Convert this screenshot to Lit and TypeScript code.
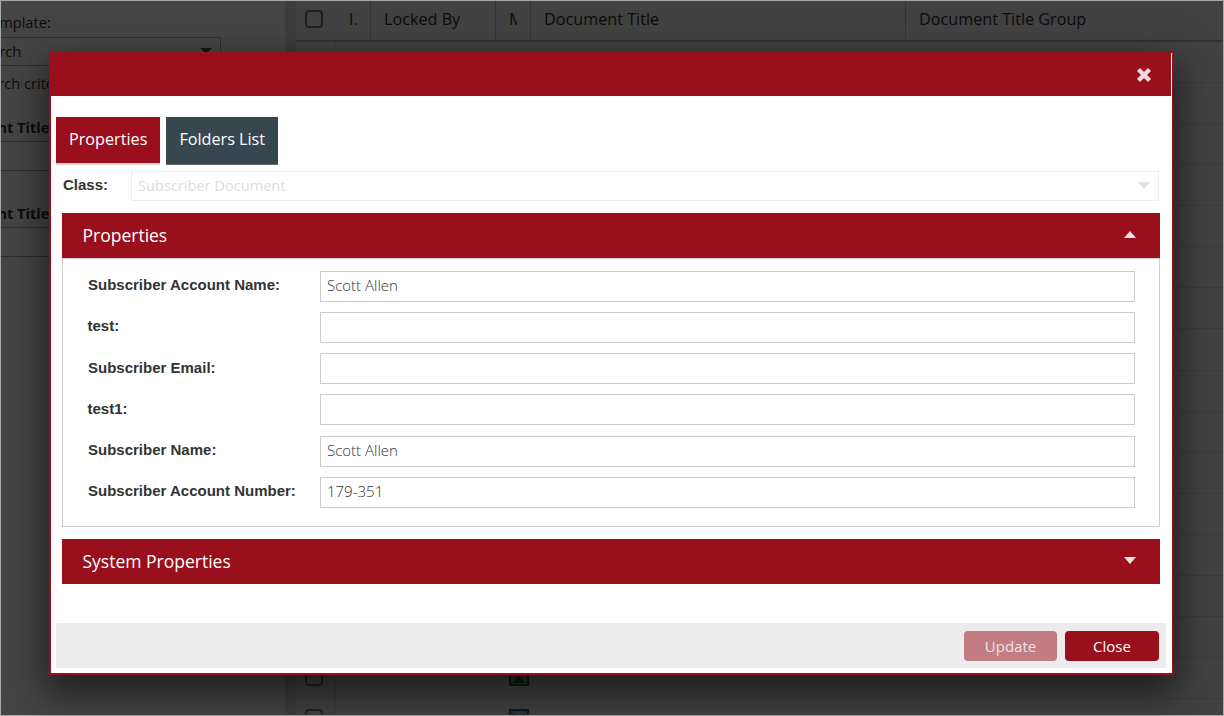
import { LitElement, html, css } from 'lit'
import { customElement } from 'lit/decorators.js'

const FIELDS = [
  { label: 'Subscriber Account Name:', value: 'Scott Allen' },
  { label: 'test:', value: '', short: true },
  { label: 'Subscriber Email:', value: '' },
  { label: 'test1:', value: '', short: true },
  { label: 'Subscriber Name:', value: 'Scott Allen' },
  { label: 'Subscriber Account Number:', value: '179-351' },
]

// body rows of the grid behind the dialog
const ROWS = Array.from({ length: 17 }, (_, i) => i)

@customElement('app-root')
export class AppRoot extends LitElement {
  static styles = css`
    :host {
      display: block;
      position: relative;
      width: 1224px;
      height: 716px;
      overflow: hidden;
      font-family: 'Open Sans', sans-serif;
      color: #333;
      background: #fff;
    }

    /* page behind the dialog */
    .page {
      display: flex;
      height: 716px;
    }
    .left {
      width: 285px;
      flex: none;
      overflow: hidden;
      font-size: 14.6px;
    }
    /* the panel is scrolled sideways, so its text starts off screen */
    .left-inner {
      width: 247px;
      margin-left: -26px;
      padding-top: 12px;
    }
    .left-label {
      height: 25px;
      line-height: 20px;
      padding-left: 9px;
    }
    .left-select {
      height: 29px;
      box-sizing: border-box;
      border: 1px solid #aaa;
      line-height: 27px;
      display: flex;
      justify-content: space-between;
    }
    .left-select i {
      width: 0;
      height: 0;
      margin: 10px 8px 0 0;
      border: 6px solid transparent;
      border-top: 6px solid #555;
      border-bottom: 0;
    }
    .left-hint {
      height: 34px;
      line-height: 34px;
      white-space: nowrap;
    }
    .left-title {
      font-weight: 700;
      font-size: 14.5px;
      line-height: 26px;
      margin-left: -36px;
      border-bottom: 1px solid #aaa;
      white-space: nowrap;
      display: flex;
      align-items: flex-end;
      box-sizing: border-box;
    }
    .left-title.first {
      height: 42px;
    }
    .left-title.second {
      height: 57px;
    }
    .left-input {
      height: 28px;
      margin-left: -36px;
      border-bottom: 1px solid #aaa;
    }
    .splitter {
      width: 11px;
      flex: none;
      background: #e0e0e0;
    }
    .grid {
      flex: 1;
      font-size: 16.2px;
      background: #f2f2f2;
    }
    .grid-head {
      display: flex;
      height: 42px;
      box-sizing: border-box;
      border-bottom: 2px solid #bbb;
    }
    .cell {
      box-sizing: border-box;
      height: 40px;
      display: flex;
      align-items: center;
      border-right: 1px solid #c4c4c4;
      padding: 0 13px 2px;
      white-space: nowrap;
      flex: none;
    }
    .cell span {
      overflow: hidden;
    }
    .c-check {
      width: 39px;
      padding: 0 0 2px 9px;
      border-right: 0;
    }
    .c-i {
      width: 36px;
      padding-left: 14px;
    }
    .c-lock {
      width: 125px;
    }
    .c-m {
      width: 35px;
    }
    .c-title {
      width: 375px;
    }
    .c-group {
      flex: 1;
      border-right: 0;
    }
    .box {
      display: block;
      flex: none;
      width: 14px;
      height: 14px;
      border: 2px solid #777;
      border-radius: 4px;
    }
    .row {
      display: flex;
      height: 41.07px;
      box-sizing: border-box;
      border-bottom: 1px solid #dcdcdc;
      align-items: center;
    }
    .row-check {
      width: 40px;
      flex: none;
      box-sizing: border-box;
      padding: 0 0 2px 9px;
      border-right: 1px solid #dcdcdc;
      height: 100%;
      display: flex;
      align-items: center;
    }
    .file {
      display: block;
      margin: -2px 0 0 173px;
    }

    .overlay {
      position: absolute;
      inset: 0;
      background: rgba(0, 0, 0, 0.73);
      box-shadow: inset 0 0 0 1px #a8a8a8;
    }

    /* dialog */
    .modal {
      position: absolute;
      left: 49px;
      top: 52px;
      width: 1124px;
      height: 623px;
      box-sizing: border-box;
      background: #fff;
      border: solid #9a0f1c;
      border-width: 1px 1px 2px 2px;
      box-shadow: 0 15px 35px 5px rgba(0, 0, 0, 0.55);
      display: flex;
      flex-direction: column;
    }
    .titlebar {
      height: 43px;
      flex: none;
      margin-right: 1px;
      background: #9a0f1c;
      display: flex;
      align-items: center;
      justify-content: flex-end;
      padding-right: 19px;
    }
    .titlebar svg {
      display: block;
    }
    .body {
      flex: 1;
      padding: 21px 0 0 5px;
      min-height: 0;
    }
    .tabs {
      display: flex;
      gap: 6px;
      height: 48px;
    }
    .tab {
      box-sizing: border-box;
      height: 48px;
      padding: 0 13px 3px;
      display: flex;
      align-items: center;
      font-size: 16.2px;
      color: #fff;
      background: #37474f;
      border-bottom: 1px solid #666;
    }
    .tab.active {
      padding-bottom: 2px;
      background: #9a0f1c;
      border-bottom: 2px solid #d9cfd0;
    }
    .class-row {
      display: flex;
      align-items: center;
      margin: 6px 0 0 7px;
      height: 30px;
    }
    .lbl {
      font-family: 'Liberation Sans', Arial, sans-serif;
      font-weight: 700;
      font-size: 15px;
      color: #333;
    }
    .class-row .lbl {
      width: 68px;
      flex: none;
      margin-top: -4px;
    }
    .class-select {
      width: 1028px;
      height: 30px;
      box-sizing: border-box;
      border: 1px solid #eee;
      display: flex;
      align-items: center;
      justify-content: space-between;
      padding: 0 8px 2px 6px;
      font-size: 14.6px;
      color: #ddd;
    }
    .class-select i {
      width: 0;
      height: 0;
      border: 6px solid transparent;
      border-top: 7px solid #ddd;
      border-bottom: 0;
    }
    .section {
      margin: 12px 0 0 6px;
      width: 1098px;
    }
    .section-head {
      height: 45px;
      background: #9a0f1c;
      color: #fff;
      font-size: 17.5px;
      display: flex;
      align-items: center;
      justify-content: space-between;
      padding: 0 24px 2px 20.5px;
      box-sizing: border-box;
    }
    .section-head i {
      width: 0;
      height: 0;
      border: 6.5px solid transparent;
      border-bottom: 0;
      border-top: 7px solid #f3dfe1;
    }
    .section-head i.up {
      border-top: 0;
      border-bottom: 7px solid #f3dfe1;
    }
    .section-body {
      height: 269px;
      box-sizing: border-box;
      border: 1px solid #ccc;
      padding: 12px 24px 0 25px;
      display: flex;
      flex-direction: column;
      gap: 10.15px;
    }
    .field {
      display: flex;
      align-items: center;
      height: 31px;
    }
    .field .lbl {
      width: 232px;
      flex: none;
      margin-top: -3.5px;
    }
    .field .lbl.short {
      margin-left: -0.5px;
      width: 232.5px;
    }
    .input {
      flex: 1;
      height: 31px;
      box-sizing: border-box;
      border: 1px solid #ccc;
      padding-left: 6px;
      font-size: 15px;
      font-weight: 300;
      line-height: 27px;
      color: #333;
    }
    .footer {
      flex: none;
      height: 45px;
      margin: 0 6px 5px 5px;
      background: #ececec;
      display: flex;
      align-items: center;
      justify-content: flex-end;
      gap: 8px;
      padding-right: 7px;
    }
    .btn {
      height: 30px;
      border-radius: 4px;
      font-size: 15px;
      color: #fff;
      background: #9a0f1c;
      display: flex;
      align-items: center;
      justify-content: center;
      width: 94px;
    }
    .btn.off {
      width: 93px;
      background: #c27c82;
      color: #f1e3e4;
    }
  `

  renderFile(i: number) {
    if (i === 15) {
      return html`<svg class="file" width="20" height="19" viewBox="0 0 20 19">
        <rect x="1" y="1" width="18" height="17" fill="#a3c0ab" stroke="#1d6f42" stroke-width="2" />
        <path d="M3 16 9 8 12 11 17 16Z" fill="#1d6f42" />
      </svg>`
    }
    if (i === 16) {
      return html`<svg class="file" width="20" height="19" viewBox="0 0 20 19">
        <rect x="1" y="1" width="18" height="17" fill="#b4b8c4" stroke="#2b5797" stroke-width="2" />
        <path d="M5 5 8 14H12L15 5" fill="none" stroke="#2b5797" stroke-width="2" />
      </svg>`
    }
    return ''
  }

  render() {
    return html`
      <div class="page">
        <div class="left">
          <div class="left-inner">
            <div class="left-label">Template:</div>
            <div class="left-select"><span>Search</span><i></i></div>
            <div class="left-hint">Search criteria</div>
            <div class="left-title first">Document Title</div>
            <div class="left-input"></div>
            <div class="left-title second">Document Title</div>
            <div class="left-input"></div>
          </div>
        </div>
        <div class="splitter"></div>
        <div class="grid">
          <div class="grid-head">
            <div class="cell c-check"><i class="box"></i></div>
            <div class="cell c-i"><span>I.</span></div>
            <div class="cell c-lock"><span>Locked By</span></div>
            <div class="cell c-m"><span>M</span></div>
            <div class="cell c-title"><span>Document Title</span></div>
            <div class="cell c-group"><span>Document Title Group</span></div>
          </div>
          ${ROWS.map(
            (i) => html`
              <div class="row">
                <div class="row-check"><i class="box"></i></div>
                ${this.renderFile(i)}
              </div>
            `
          )}
        </div>
      </div>
      <div class="overlay"></div>
      <div class="modal">
        <div class="titlebar">
          <svg width="16" height="16" viewBox="0 0 16 16">
            <path
              d="M1.500 4 4 1.500 8 5.500 12 1.500 14.500 4 10.500 8 14.500 12 12 14.500 8 10.500 4 14.500 1.500 12 5.500 8Z"
              fill="#f3dde0"
              stroke="#f3dde0"
              stroke-width="1"
              stroke-linejoin="round"
            />
          </svg>
        </div>
        <div class="body">
          <div class="tabs">
            <div class="tab active">Properties</div>
            <div class="tab">Folders List</div>
          </div>
          <div class="class-row">
            <span class="lbl">Class:</span>
            <div class="class-select"><span>Subscriber Document</span><i></i></div>
          </div>
          <div class="section">
            <div class="section-head"><span>Properties</span><i class="up"></i></div>
            <div class="section-body">
              ${FIELDS.map(
                (f) => html`
                  <div class="field">
                    <span class="lbl ${f.short ? 'short' : ''}">${f.label}</span>
                    <div class="input">${f.value}</div>
                  </div>
                `
              )}
            </div>
          </div>
          <div class="section">
            <div class="section-head"><span>System Properties</span><i></i></div>
          </div>
        </div>
        <div class="footer">
          <div class="btn off">Update</div>
          <div class="btn">Close</div>
        </div>
      </div>
    `
  }
}
